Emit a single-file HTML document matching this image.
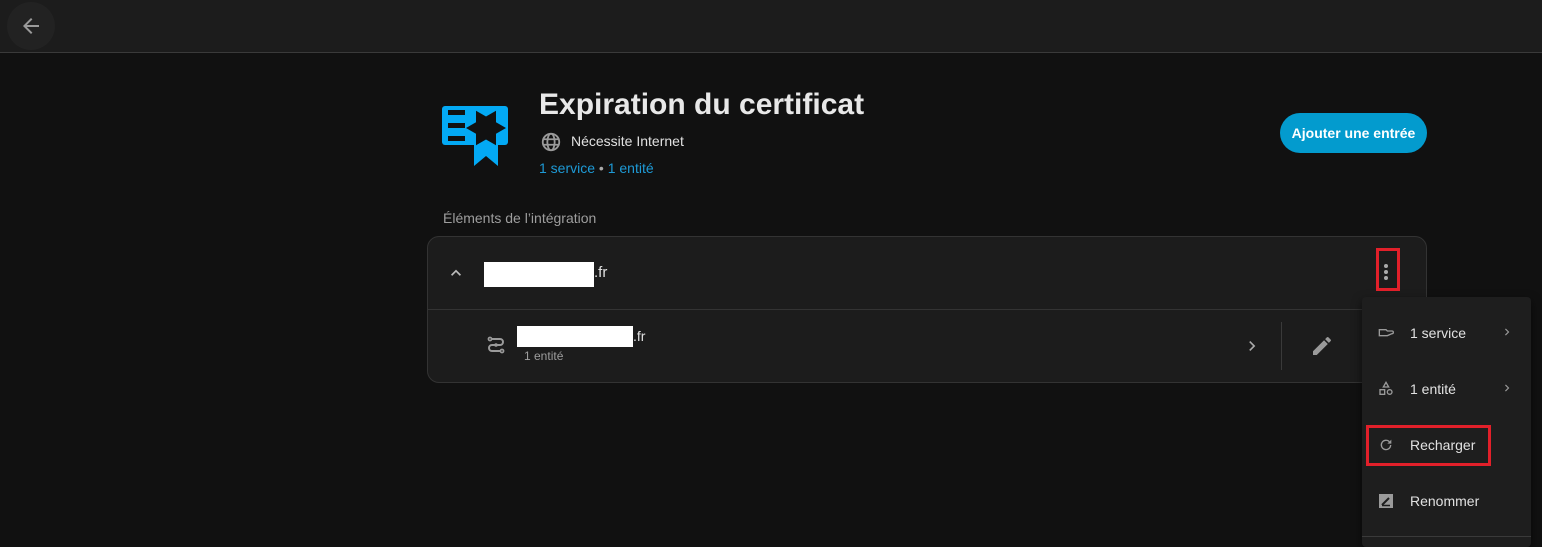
<!DOCTYPE html>
<html><head><meta charset="utf-8"><style>
*{box-sizing:border-box;margin:0;padding:0}
body{width:1542px;height:539px;overflow:hidden;background:#111111;font-family:"Liberation Sans",sans-serif;color:#e1e1e1;position:relative}
.abs{position:absolute}
</style></head><body>
<div class="abs" style="left:0;top:0;width:1542px;height:53px;background:#1c1c1c;border-bottom:1px solid #3a3a3a"></div>
<div class="abs" style="left:7px;top:2px;width:48px;height:48px;border-radius:50%;background:#222"></div>
<svg class="abs" style="left:19px;top:14px" width="24" height="24" viewBox="0 0 24 24"><path d="M20 11H7.8l5.6-5.6L12 4l-8 8 8 8 1.4-1.4L7.8 13H20z" fill="#9a9a9a"/></svg>

<!-- logo -->
<svg class="abs" style="left:436px;top:96px" width="80" height="72" viewBox="0 0 80 72">
<rect x="6" y="10" width="66" height="39" rx="3" fill="#03a9f4"/>
<rect x="12" y="14" width="17" height="5" fill="#111"/><rect x="12" y="27" width="17" height="5" fill="#111"/><rect x="12" y="40" width="17" height="5" fill="#111"/>
<polygon points="38,44 62,44 62,70 50,60 38,70" fill="#03a9f4"/>
<polygon points="70,32 60,26.2 60,14.7 50,20.5 40,14.7 40,26.2 30,32 40,37.8 40,49.3 50,43.5 60,49.3 60,37.8" fill="#111"/>
</svg>

<div class="abs" style="left:539px;top:88px;font-size:30px;font-weight:bold;color:#e8e8e8">Expiration du certificat</div>
<svg class="abs" style="left:540px;top:131px" width="22" height="22" viewBox="0 0 24 24"><circle cx="12" cy="12" r="9" fill="none" stroke="#9a9a9a" stroke-width="2"/><ellipse cx="12" cy="12" rx="4" ry="9" fill="none" stroke="#9a9a9a" stroke-width="2"/><path d="M3 9h18M3 15h18" stroke="#9a9a9a" stroke-width="2"/></svg>
<div class="abs" style="left:571px;top:133px;font-size:14px;color:#e1e1e1">Nécessite Internet</div>
<div class="abs" style="left:539px;top:160px;font-size:14px;color:#1e9ad6">1 service <span style="color:#aaa">•</span> 1 entité</div>

<div class="abs" style="left:1280px;top:113px;width:147px;height:40px;border-radius:20px;background:#039bce;color:#fff;font-size:14px;font-weight:bold;text-align:center;line-height:40px">Ajouter une entrée</div>

<div class="abs" style="left:443px;top:210px;font-size:14px;color:#9e9e9e">Éléments de l’intégration</div>

<div class="abs" style="left:427px;top:236px;width:1000px;height:147px;background:#1c1c1c;border:1px solid #333;border-radius:12px"></div>
<div class="abs" style="left:428px;top:309px;width:998px;height:1px;background:#333"></div>
<svg class="abs" style="left:446px;top:263px" width="20" height="20" viewBox="0 0 24 24"><path d="M7.4 15.4 12 10.8l4.6 4.6L18 14l-6-6-6 6z" fill="#bbb"/></svg>
<div class="abs" style="left:484px;top:262px;width:110px;height:25px;background:#fff"></div>
<div class="abs" style="left:594px;top:264px;font-size:15px;color:#e1e1e1">.fr</div>
<div class="abs" style="left:1376px;top:248px;width:24px;height:43px;border:3px solid #e2202a"></div>
<div class="abs" style="left:1384px;top:264px;width:4px;height:4px;border-radius:50%;background:#aaa"></div>
<div class="abs" style="left:1384px;top:270px;width:4px;height:4px;border-radius:50%;background:#aaa"></div>
<div class="abs" style="left:1384px;top:276px;width:4px;height:4px;border-radius:50%;background:#aaa"></div>

<svg class="abs" style="left:484px;top:334px" width="24" height="24" viewBox="0 0 24 24"><path d="M7 5h9a3 3 0 0 1 0 6H8a3 3 0 0 0 0 6h9" fill="none" stroke="#9a9a9a" stroke-width="2"/><circle cx="6" cy="5" r="1.6" fill="none" stroke="#9a9a9a" stroke-width="1.6"/><circle cx="18" cy="17" r="1.6" fill="none" stroke="#9a9a9a" stroke-width="1.6"/><circle cx="12" cy="11" r="1.8" fill="#9a9a9a"/></svg>
<div class="abs" style="left:517px;top:326px;width:116px;height:21px;background:#fff"></div>
<div class="abs" style="left:633px;top:328px;font-size:14px;color:#e1e1e1">.fr</div>
<div class="abs" style="left:524px;top:349px;font-size:12px;color:#9e9e9e">1 entité</div>
<svg class="abs" style="left:1242px;top:336px" width="20" height="20" viewBox="0 0 24 24"><path d="M8.6 16.6 13.2 12 8.6 7.4 10 6l6 6-6 6z" fill="#aaa"/></svg>
<div class="abs" style="left:1281px;top:322px;width:1px;height:48px;background:#3a3a3a"></div>
<svg class="abs" style="left:1310px;top:334px" width="24" height="24" viewBox="0 0 24 24"><path d="M3 17.25V21h3.75L17.8 9.94l-3.750-3.75zM20.7 7.04a1 1 0 0 0 0-1.41l-2.34-2.34a1 1 0 0 0-1.41 0l-1.83 1.83 3.75 3.75z" fill="#9a9a9a"/></svg>

<!-- menu -->
<div class="abs" style="left:1362px;top:297px;width:169px;height:250px;background:#1e1e1e;border-radius:4px;box-shadow:0 4px 10px rgba(0,0,0,.6)"></div>
<div class="abs" style="left:1362px;top:536px;width:169px;height:1px;background:#3a3a3a"></div>
<svg class="abs" style="left:1378px;top:325px" width="16" height="16" viewBox="0 0 24 24"><path d="M2 7h10l2 2h7a2 2 0 0 1 0 4l-7 3H2z" fill="none" stroke="#9a9a9a" stroke-width="2"/></svg>
<div class="abs" style="left:1410px;top:325px;font-size:14px;color:#e1e1e1">1 service</div>
<svg class="abs" style="left:1500px;top:325px" width="14" height="14" viewBox="0 0 24 24"><path d="M8.6 16.6 13.2 12 8.6 7.4 10 6l6 6-6 6z" fill="#9a9a9a"/></svg>
<svg class="abs" style="left:1378px;top:381px" width="16" height="16" viewBox="0 0 24 24"><path d="M12 2 16 9H8z M3 13h7v7H3z" fill="none" stroke="#9a9a9a" stroke-width="2"/><circle cx="17.5" cy="16.5" r="3.5" fill="none" stroke="#9a9a9a" stroke-width="2"/></svg>
<div class="abs" style="left:1410px;top:381px;font-size:14px;color:#e1e1e1">1 entité</div>
<svg class="abs" style="left:1500px;top:381px" width="14" height="14" viewBox="0 0 24 24"><path d="M8.6 16.6 13.2 12 8.6 7.4 10 6l6 6-6 6z" fill="#9a9a9a"/></svg>
<div class="abs" style="left:1366px;top:425px;width:125px;height:41px;border:3px solid #e2202a"></div>
<svg class="abs" style="left:1378px;top:437px" width="16" height="16" viewBox="0 0 24 24"><path d="M19 12a7 7 0 1 1-2-5" fill="none" stroke="#9a9a9a" stroke-width="2"/><path d="M20 4v6h-6z" fill="#9a9a9a"/></svg>
<div class="abs" style="left:1410px;top:437px;font-size:14px;color:#e1e1e1">Recharger</div>
<svg class="abs" style="left:1379px;top:494px" width="14" height="14" viewBox="0 0 14 14"><rect width="14" height="14" fill="#9a9a9a"/><path d="M3 11 10 4" stroke="#1e1e1e" stroke-width="2"/><path d="M3 11.5h8" stroke="#1e1e1e" stroke-width="1.5"/></svg>
<div class="abs" style="left:1410px;top:493px;font-size:14px;color:#e1e1e1">Renommer</div>
</body></html>
